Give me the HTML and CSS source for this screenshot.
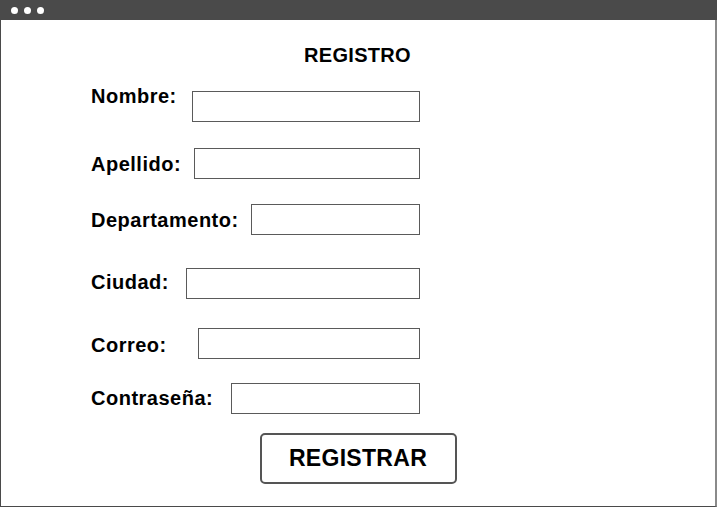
FILE: index.html
```html
<!DOCTYPE html>
<html lang="es">
<head>
<meta charset="utf-8">
<title>Registro</title>
<link rel="stylesheet" href="styles.css">
</head>
<body>
<div class="window">
  <div class="titlebar">
    <span class="dot"></span><span class="dot"></span><span class="dot"></span>
  </div>
  <div class="content">
    <h1 class="title">REGISTRO</h1>
    <form class="form">
      <div class="row row-nombre"><label class="label">Nombre:</label><input class="field f-nombre" type="text"></div>
      <div class="row row-apellido"><label class="label">Apellido:</label><input class="field f-apellido" type="text"></div>
      <div class="row row-depto"><label class="label">Departamento:</label><input class="field f-depto" type="text"></div>
      <div class="row row-ciudad"><label class="label">Ciudad:</label><input class="field f-ciudad" type="text"></div>
      <div class="row row-correo"><label class="label">Correo:</label><input class="field f-correo" type="text"></div>
      <div class="row row-pass"><label class="label">Contraseña:</label><input class="field f-pass" type="password"></div>
      <div class="actions"><button class="btn" type="button">REGISTRAR</button></div>
    </form>
  </div>
</div>
</body>
</html>
```
FILE: styles.css
```css
html, body {
  margin: 0;
  padding: 0;
  background: #fff;
}
body {
  font-family: "Liberation Sans", Arial, sans-serif;
  color: #000;
}
.window {
  width: 717px;
  height: 507px;
  box-sizing: border-box;
  border-left: 1px solid #4a4a4a;
  border-right: 2px solid #8a8a8a;
  border-bottom: 1px solid #4a4a4a;
  display: flex;
  flex-direction: column;
}
.titlebar {
  height: 20px;
  background: #4a4a4a;
  display: flex;
  align-items: center;
  gap: 6px;
  padding-left: 11px;
  margin-left: -1px;
  margin-right: -2px;
  flex-shrink: 0;
}
.dot {
  width: 7px;
  height: 7px;
  border-radius: 50%;
  background: #fff;
}
.content {
  flex: 1;
  display: flex;
  flex-direction: column;
}
.title {
  margin: 24px 0 0;
  text-align: center;
  font-size: 20px;
  line-height: 22px;
  font-weight: bold;
  letter-spacing: 0.3px;
  padding-right: 1px;
}
.form {
  display: flex;
  flex-direction: column;
  margin-left: 90px;
  width: 329px;
}
.row {
  display: flex;
  justify-content: space-between;
  align-items: center;
  height: 31px;
}
.label {
  font-size: 20px;
  font-weight: bold;
  letter-spacing: 0.5px;
  line-height: 22px;
}
.field {
  box-sizing: border-box;
  height: 31px;
  border: 1px solid #5a5a5a;
  outline: none;
  background: #fff;
  margin: 0;
  padding: 0;
}
.row-nombre { margin-top: 25px; }
.row-nombre .label { align-self: flex-start; margin-top: -6px; }
.row-apellido { margin-top: 26px; }
.row-depto { margin-top: 25px; }
.row-ciudad { margin-top: 33px; }
.row-ciudad .label { margin-top: -3px; }
.row-correo { margin-top: 29px; }
.row-correo .label { margin-top: 3px; }
.row-pass { margin-top: 24px; }
.row-pass .label { margin-top: -2px; }
.f-nombre { width: 228px; }
.f-apellido { width: 226px; }
.f-depto { width: 169px; }
.f-ciudad { width: 234px; }
.f-correo { width: 222px; }
.f-pass { width: 189px; }
.actions {
  display: flex;
  justify-content: center;
  margin-top: 19px;
  margin-left: -90px;
  width: 714px;
}
.btn {
  width: 197px;
  height: 51px;
  box-sizing: border-box;
  border: 2px solid #555;
  border-radius: 5px;
  background: #fff;
  font-family: "Liberation Sans", Arial, sans-serif;
  font-size: 23px;
  font-weight: bold;
  letter-spacing: 0.3px;
  color: #000;
  padding: 0;
}
```
